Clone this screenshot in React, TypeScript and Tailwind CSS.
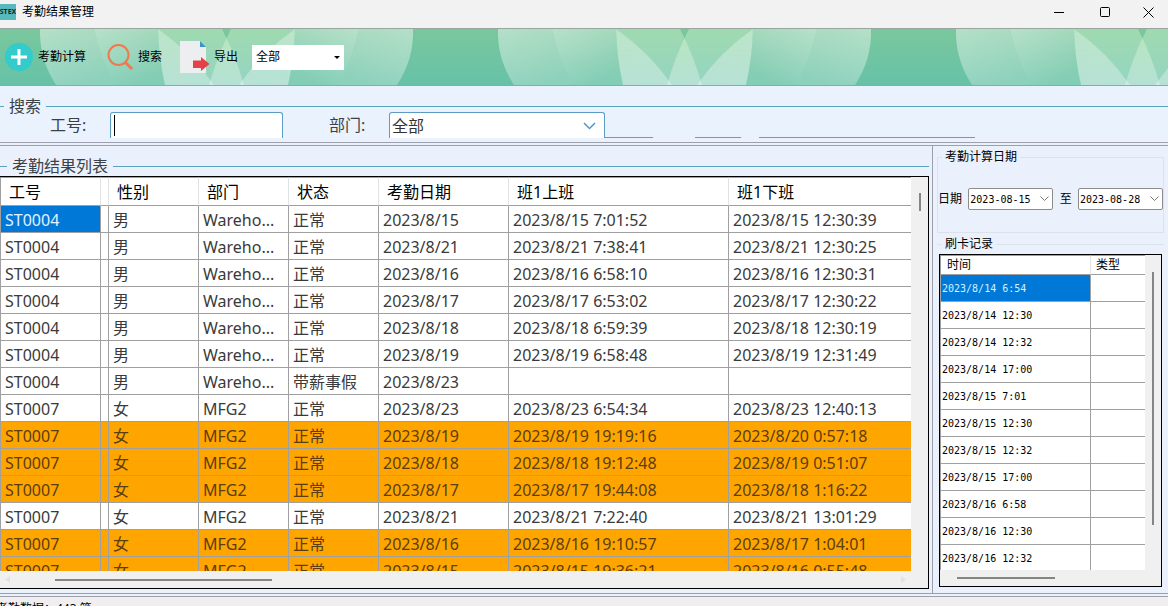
import React from "react";

type Row = {
  id: string;
  sex: string;
  dept: string;
  status: string;
  date: string;
  start: string;
  end: string;
  late?: boolean;
};

const wh = "Wareho...";

const rows: Row[] = [
  { id: "ST0004", sex: "男", dept: wh, status: "正常", date: "2023/8/15", start: "2023/8/15 7:01:52", end: "2023/8/15 12:30:39" },
  { id: "ST0004", sex: "男", dept: wh, status: "正常", date: "2023/8/21", start: "2023/8/21 7:38:41", end: "2023/8/21 12:30:25" },
  { id: "ST0004", sex: "男", dept: wh, status: "正常", date: "2023/8/16", start: "2023/8/16 6:58:10", end: "2023/8/16 12:30:31" },
  { id: "ST0004", sex: "男", dept: wh, status: "正常", date: "2023/8/17", start: "2023/8/17 6:53:02", end: "2023/8/17 12:30:22" },
  { id: "ST0004", sex: "男", dept: wh, status: "正常", date: "2023/8/18", start: "2023/8/18 6:59:39", end: "2023/8/18 12:30:19" },
  { id: "ST0004", sex: "男", dept: wh, status: "正常", date: "2023/8/19", start: "2023/8/19 6:58:48", end: "2023/8/19 12:31:49" },
  { id: "ST0004", sex: "男", dept: wh, status: "带薪事假", date: "2023/8/23", start: "", end: "" },
  { id: "ST0007", sex: "女", dept: "MFG2", status: "正常", date: "2023/8/23", start: "2023/8/23 6:54:34", end: "2023/8/23 12:40:13" },
  { id: "ST0007", sex: "女", dept: "MFG2", status: "正常", date: "2023/8/19", start: "2023/8/19 19:19:16", end: "2023/8/20 0:57:18", late: true },
  { id: "ST0007", sex: "女", dept: "MFG2", status: "正常", date: "2023/8/18", start: "2023/8/18 19:12:48", end: "2023/8/19 0:51:07", late: true },
  { id: "ST0007", sex: "女", dept: "MFG2", status: "正常", date: "2023/8/17", start: "2023/8/17 19:44:08", end: "2023/8/18 1:16:22", late: true },
  { id: "ST0007", sex: "女", dept: "MFG2", status: "正常", date: "2023/8/21", start: "2023/8/21 7:22:40", end: "2023/8/21 13:01:29" },
  { id: "ST0007", sex: "女", dept: "MFG2", status: "正常", date: "2023/8/16", start: "2023/8/16 19:10:57", end: "2023/8/17 1:04:01", late: true },
  { id: "ST0007", sex: "女", dept: "MFG2", status: "正常", date: "2023/8/15", start: "2023/8/15 19:36:21", end: "2023/8/16 0:55:48", late: true },
];

const punches = [
  "2023/8/14 6:54",
  "2023/8/14 12:30",
  "2023/8/14 12:32",
  "2023/8/14 17:00",
  "2023/8/15 7:01",
  "2023/8/15 12:30",
  "2023/8/15 12:32",
  "2023/8/15 17:00",
  "2023/8/16 6:58",
  "2023/8/16 12:30",
  "2023/8/16 12:32",
];

const headers = ["工号", "", "性别", "部门", "状态", "考勤日期", "班1上班", "班1下班"];

function TitleBar() {
  return (
    <header className="flex h-7 shrink-0 items-center bg-[#f2f2f2] pb-1">
      <span className="flex h-4 w-4 items-center justify-center overflow-hidden bg-[#57b9bb] text-[7px] leading-4 font-bold text-[#102a30]">
        STEX
      </span>
      <h1 className="ml-1.5 text-xs text-black">考勤结果管理</h1>
      <div className="ml-auto flex">
        <button aria-label="最小化" className="flex h-6 w-[46px] items-center justify-center">
          <svg width="10" height="10" stroke="#000" fill="none"><path d="M0 5.5H10" /></svg>
        </button>
        <button aria-label="最大化" className="flex h-6 w-[46px] items-center justify-center">
          <svg width="10" height="10" stroke="#000" fill="none"><rect x="0.5" y="0.5" width="9" height="9" rx="1" /></svg>
        </button>
        <button aria-label="关闭" className="flex h-6 w-10 items-center justify-center">
          <svg width="11" height="11" stroke="#000" fill="none"><path d="M0.5 0.5L10.5 10.5M10.5 0.5L0.5 10.5" /></svg>
        </button>
      </div>
    </header>
  );
}

function PetalBackdrop() {
  return (
    <svg className="absolute inset-0 h-full w-full" aria-hidden="true">
      <defs>
        <linearGradient id="base" x1="0" y1="0" x2="0" y2="1">
          <stop offset="0" stopColor="#7ac79d" />
          <stop offset="1" stopColor="#66c2a7" />
        </linearGradient>
        <linearGradient id="outer" x1="0" y1="0" x2="0.7" y2="1">
          <stop offset="0" stopColor="#fff" stopOpacity="0.44" />
          <stop offset="1" stopColor="#fff" stopOpacity="0.24" />
        </linearGradient>
        <linearGradient id="second" x1="0" y1="0" x2="0.8" y2="1">
          <stop offset="0" stopColor="#fff" stopOpacity="0.46" />
          <stop offset="0.9" stopColor="#fff" stopOpacity="0.18" />
        </linearGradient>
        <linearGradient id="inner" x1="0" y1="0" x2="0" y2="1">
          <stop offset="0" stopColor="#e0fbd0" stopOpacity="0.36" />
          <stop offset="1" stopColor="#fff" stopOpacity="0.3" />
        </linearGradient>
        <linearGradient id="narrow" x1="0" y1="0" x2="0.3" y2="1">
          <stop offset="0" stopColor="#fff" stopOpacity="0.3" />
          <stop offset="1" stopColor="#fff" stopOpacity="0.32" />
        </linearGradient>
        <g id="half">
          <path d="M0 0Q-1 30 16 56H74Q61 30 54 0Z" fill="url(#outer)" />
          <path d="M54 0Q61 30 74 56H125Q119 30 118 0Z" fill="url(#second)" />
          <path d="M118 0H182Q195 25 204 56H125Q119 30 118 0Z" fill="url(#inner)" />
          <path d="M118 0Q151 23 174 56H125Q119 30 118 0Z" fill="url(#narrow)" />
        </g>
        <pattern id="petals" x="40" y="0" width="458" height="56" patternUnits="userSpaceOnUse">
          <use href="#half" />
          <use href="#half" transform="translate(373 0) scale(-1 1)" />
        </pattern>
      </defs>
      <rect width="100%" height="100%" fill="url(#base)" />
      <rect width="100%" height="100%" fill="url(#petals)" />
    </svg>
  );
}

function Toolbar() {
  return (
    <div className="relative h-[58px] shrink-0 overflow-hidden border-y border-[#98a5a0]">
      <PetalBackdrop />
      <div className="relative flex h-full items-center pl-1 text-xs text-black">
        <button className="flex items-center gap-1">
          <svg width="30" height="30" viewBox="0 0 30 30">
            <circle cx="15" cy="15" r="14" fill="#33cbcb" />
            <path d="M15 7V23M7 15H23" stroke="#fff" strokeWidth="3" />
          </svg>
          考勤计算
        </button>
        <button className="ml-5 flex items-center gap-1">
          <svg width="28" height="28" viewBox="0 0 28 28" fill="none" stroke="#ee7a4d">
            <circle cx="12.5" cy="12" r="10" strokeWidth="2" />
            <path d="M19 19L26 26" strokeWidth="3" />
          </svg>
          搜索
        </button>
        <button className="ml-[17px] flex items-center gap-1">
          <svg width="31" height="32" viewBox="0 0 31 32">
            <path d="M1 0H21L27 6V32H1Z" fill="#eceef0" />
            <path d="M21 0L27 6H21Z" fill="#3b94c8" />
            <path d="M14 19.500H22V16L30.500 23L22 30V27H14Z" fill="#e64146" />
          </svg>
          导出
        </button>
        <label className="relative ml-3.5 block">
          <select aria-label="范围" className="block h-[25px] w-[92px] appearance-none bg-white pl-1 text-xs text-black">
            <option>全部</option>
          </select>
          <svg className="pointer-events-none absolute top-[11px] right-1" width="6" height="3"><path d="M0 0H6L3 3Z" fill="#000" /></svg>
        </label>
      </div>
    </div>
  );
}

function SearchPanel() {
  return (
    <section className="h-14 shrink-0 bg-[#eaf2fd] pt-[14px]">
      <fieldset className="min-w-0 border-t border-[#5aa5bd]">
        <legend className="ml-1 px-[5px] text-base leading-3 text-[#3c4148]">搜索</legend>
        <div className="flex h-[26px] items-stretch overflow-hidden pl-[50px] text-base text-[#3c4148]">
          <label htmlFor="emp" className="w-[60px] leading-[26px]">工号:</label>
          <span className="relative block">
            <input
              id="emp"
              className="block h-[26px] w-[173px] rounded-t-[3px] border border-b-0 border-[#5b9bc4] bg-white px-1 outline-none"
            />
            <span className="pointer-events-none absolute top-[3px] left-1 h-[21px] w-px bg-black" />
          </span>
          <label htmlFor="dept" className="ml-[46px] w-[60px] leading-[26px]">部门:</label>
          <span className="relative block">
            <select
              id="dept"
              className="block h-[26px] w-[216px] appearance-none rounded-t-[3px] border border-b-0 border-[#5b9bc4] bg-white pl-0.5 text-[#333]"
            >
              <option>全部</option>
            </select>
            <svg className="pointer-events-none absolute top-[10px] right-[9px]" width="13" height="8" fill="none" stroke="#5596c8" strokeWidth="1.500">
              <path d="M1 1L6.500 6.500L12 1" />
            </svg>
          </span>
          <span className="w-12 border-b border-b-[#5aa5bd]" />
          <span className="ml-[42px] w-[46px] border-b border-b-[#5aa5bd]" />
          <span className="ml-[18px] w-[216px] border-b border-b-[#5aa5bd]" />
        </div>
      </fieldset>
    </section>
  );
}

function Divider() {
  return <div className="h-1 shrink-0 border-y border-[#9da0ac] bg-[#eaf1fb]" />;
}

function ResultTable() {
  return (
    <div className="flex min-h-0 flex-1 flex-col border border-l-0 border-black bg-[#f0f0f0]">
      <div className="flex min-h-0 flex-1">
        <div className="min-w-0 flex-1 overflow-hidden bg-white">
          <table className="w-full table-fixed border-separate border-spacing-0 text-base">
            <colgroup>
              <col className="w-[101px]" />
              <col className="w-2" />
              <col className="w-[90px]" />
              <col className="w-[90px]" />
              <col className="w-[90px]" />
              <col className="w-[130px]" />
              <col className="w-[220px]" />
              <col />
            </colgroup>
            <thead>
              <tr className="h-[29px]">
                {headers.map((h, i) => (
                  <th
                    key={i}
                    className="overflow-hidden border-t border-r border-b border-t-[#a0a0a0] border-r-[#e2e2e2] border-b-[#a0a0a0] p-0 text-left leading-6 font-normal whitespace-nowrap text-black first:border-l first:border-l-[#a0a0a0] last:border-r-0"
                  >
                    <span className="pl-2">{h}</span>
                  </th>
                ))}
              </tr>
            </thead>
            <tbody>
              {rows.map((r, i) => (
                <tr key={i} className={r.late ? "h-[27px] bg-[#ffa500] text-[#5b3d10]" : "h-[27px] text-[#3a3a3a]"}>
                  {[r.id, "", r.sex, r.dept, r.status, r.date, r.start, r.end].map((v, j) => (
                    <td
                      key={j}
                      className={
                        i === 0 && j === 0
                          ? "border-r border-b border-l border-[#a0a0a0] bg-[#0078d7] p-0 pt-0.5 pl-1 leading-6 whitespace-nowrap text-[#e4f2ff]"
                          : "overflow-hidden border-r border-b border-[#a0a0a0] p-0 pt-0.5 leading-6 whitespace-nowrap first:border-l last:border-r-0"
                      }
                    >
                      {i === 0 && j === 0 ? v : v && <span className="pl-1">{v}</span>}
                    </td>
                  ))}
                </tr>
              ))}
            </tbody>
          </table>
        </div>
        <div className="w-[17px] shrink-0 pt-4 pl-2">
          <div className="h-[18px] w-0.5 bg-[#858585]" />
        </div>
      </div>
      <div className="flex h-[17px] shrink-0 items-center justify-between pr-[22px] pl-[5px]">
        <svg width="5" height="7" fill="#e2e2e2"><path d="M5 0V7L0 3.500Z" /></svg>
        <div className="mr-auto ml-[45px] h-0.5 w-[217px] bg-[#858585]" />
        <svg width="5" height="7" fill="#e2e2e2"><path d="M0 0V7L5 3.500Z" /></svg>
      </div>
    </div>
  );
}

function DateField({ label, value }: { label: string; value: string }) {
  return (
    <span className="relative block h-[22px] w-[85px]">
      <input
        aria-label={label}
        defaultValue={value}
        className="block h-full w-full rounded-[2px] border border-[#8c8c8c] bg-white px-px font-['DejaVu_Sans_Mono',monospace] text-[10px] text-black"
      />
      <svg className="absolute top-2 right-1" width="9" height="6" fill="none" stroke="#777">
        <path d="M0.500 0.500L4.500 4.500L8.500 0.500" />
      </svg>
    </span>
  );
}

function PunchTable() {
  return (
    <div className="mx-0.5 mt-1 flex min-h-0 flex-1 flex-col border border-black bg-[#f0f0f0]">
      <div className="flex min-h-0 flex-1">
        <div className="min-w-0 flex-1 overflow-hidden bg-white">
          <table className="w-full table-fixed border-separate border-spacing-0 border-l border-[#a0a0a0]">
            <colgroup>
              <col className="w-[150px]" />
              <col />
            </colgroup>
            <thead>
              <tr className="h-5 text-left text-xs text-black">
                <th className="border-t border-r border-b border-[#a0a0a0] border-r-[#e2e2e2] p-0 pl-1.5 leading-[18px] font-normal">时间</th>
                <th className="border-t border-b border-[#a0a0a0] p-0 pl-[5px] leading-[18px] font-normal">类型</th>
              </tr>
            </thead>
            <tbody className="font-['DejaVu_Sans_Mono',monospace] text-[10px]">
              {punches.map((p, i) => (
                <tr key={p} className="h-[27px]">
                  <td
                    className={
                      i === 0
                        ? "border-r border-b border-[#a0a0a0] bg-[#0078d7] p-0 pt-0.5 pl-px leading-6 whitespace-nowrap text-[#d8f0ff]"
                        : "border-r border-b border-[#a0a0a0] p-0 pt-0.5 pl-px leading-6 whitespace-nowrap text-black"
                    }
                  >
                    {p}
                  </td>
                  <td className="border-b border-[#a0a0a0] p-0" />
                </tr>
              ))}
            </tbody>
          </table>
        </div>
        <div className="w-4 shrink-0 pt-[17px] pl-[7px]">
          <div className="h-[253px] w-0.5 bg-[#858585]" />
        </div>
      </div>
      <div className="h-4 shrink-0 pt-[7px] pl-[17px]">
        <div className="h-0.5 w-[98px] bg-[#858585]" />
      </div>
    </div>
  );
}

export default function App() {
  return (
    <div className="flex h-screen flex-col overflow-hidden bg-[#eaf1fd] font-['Noto_Sans','Noto_Sans_CJK_SC',sans-serif]">
      <TitleBar />
      <Toolbar />
      <SearchPanel />
      <Divider />
      <main className="flex min-h-0 flex-1">
        <section className="flex min-w-0 flex-1 flex-col pt-3 pr-[3px] pb-1">
          <fieldset className="min-w-0 shrink-0 border-t border-[#5aa5bd]">
            <legend className="ml-[7px] px-[5px] text-base leading-4 text-[#3c4148]">考勤结果列表</legend>
            <div className="h-0.5" />
          </fieldset>
          <ResultTable />
        </section>
        <aside className="flex w-[236px] shrink-0 flex-col border-l border-[#9da0ac] pt-[5px] pr-1 pb-1.5 pl-1 text-xs text-black">
          <fieldset className="min-w-0 shrink-0 border border-[#dbe2ec]">
            <legend className="ml-1 px-[3px] leading-3">考勤计算日期</legend>
            <div className="flex items-center justify-between pt-[25px] pb-[22px]">
              <span>日期</span>
              <DateField label="开始日期" value="2023-08-15" />
              <span>至</span>
              <DateField label="结束日期" value="2023-08-28" />
            </div>
          </fieldset>
          <fieldset className="mt-[5px] min-w-0 shrink-0 border-t border-[#dbe2ec]">
            <legend className="ml-[5px] px-[3px] leading-3">刷卡记录</legend>
          </fieldset>
          <PunchTable />
        </aside>
      </main>
      <Divider />
      <footer className="h-[9px] shrink-0 overflow-hidden bg-[#f0eeee] pt-1">
        <p className="-ml-1 text-xs text-black">考勤数据：443 笔</p>
      </footer>
    </div>
  );
}
